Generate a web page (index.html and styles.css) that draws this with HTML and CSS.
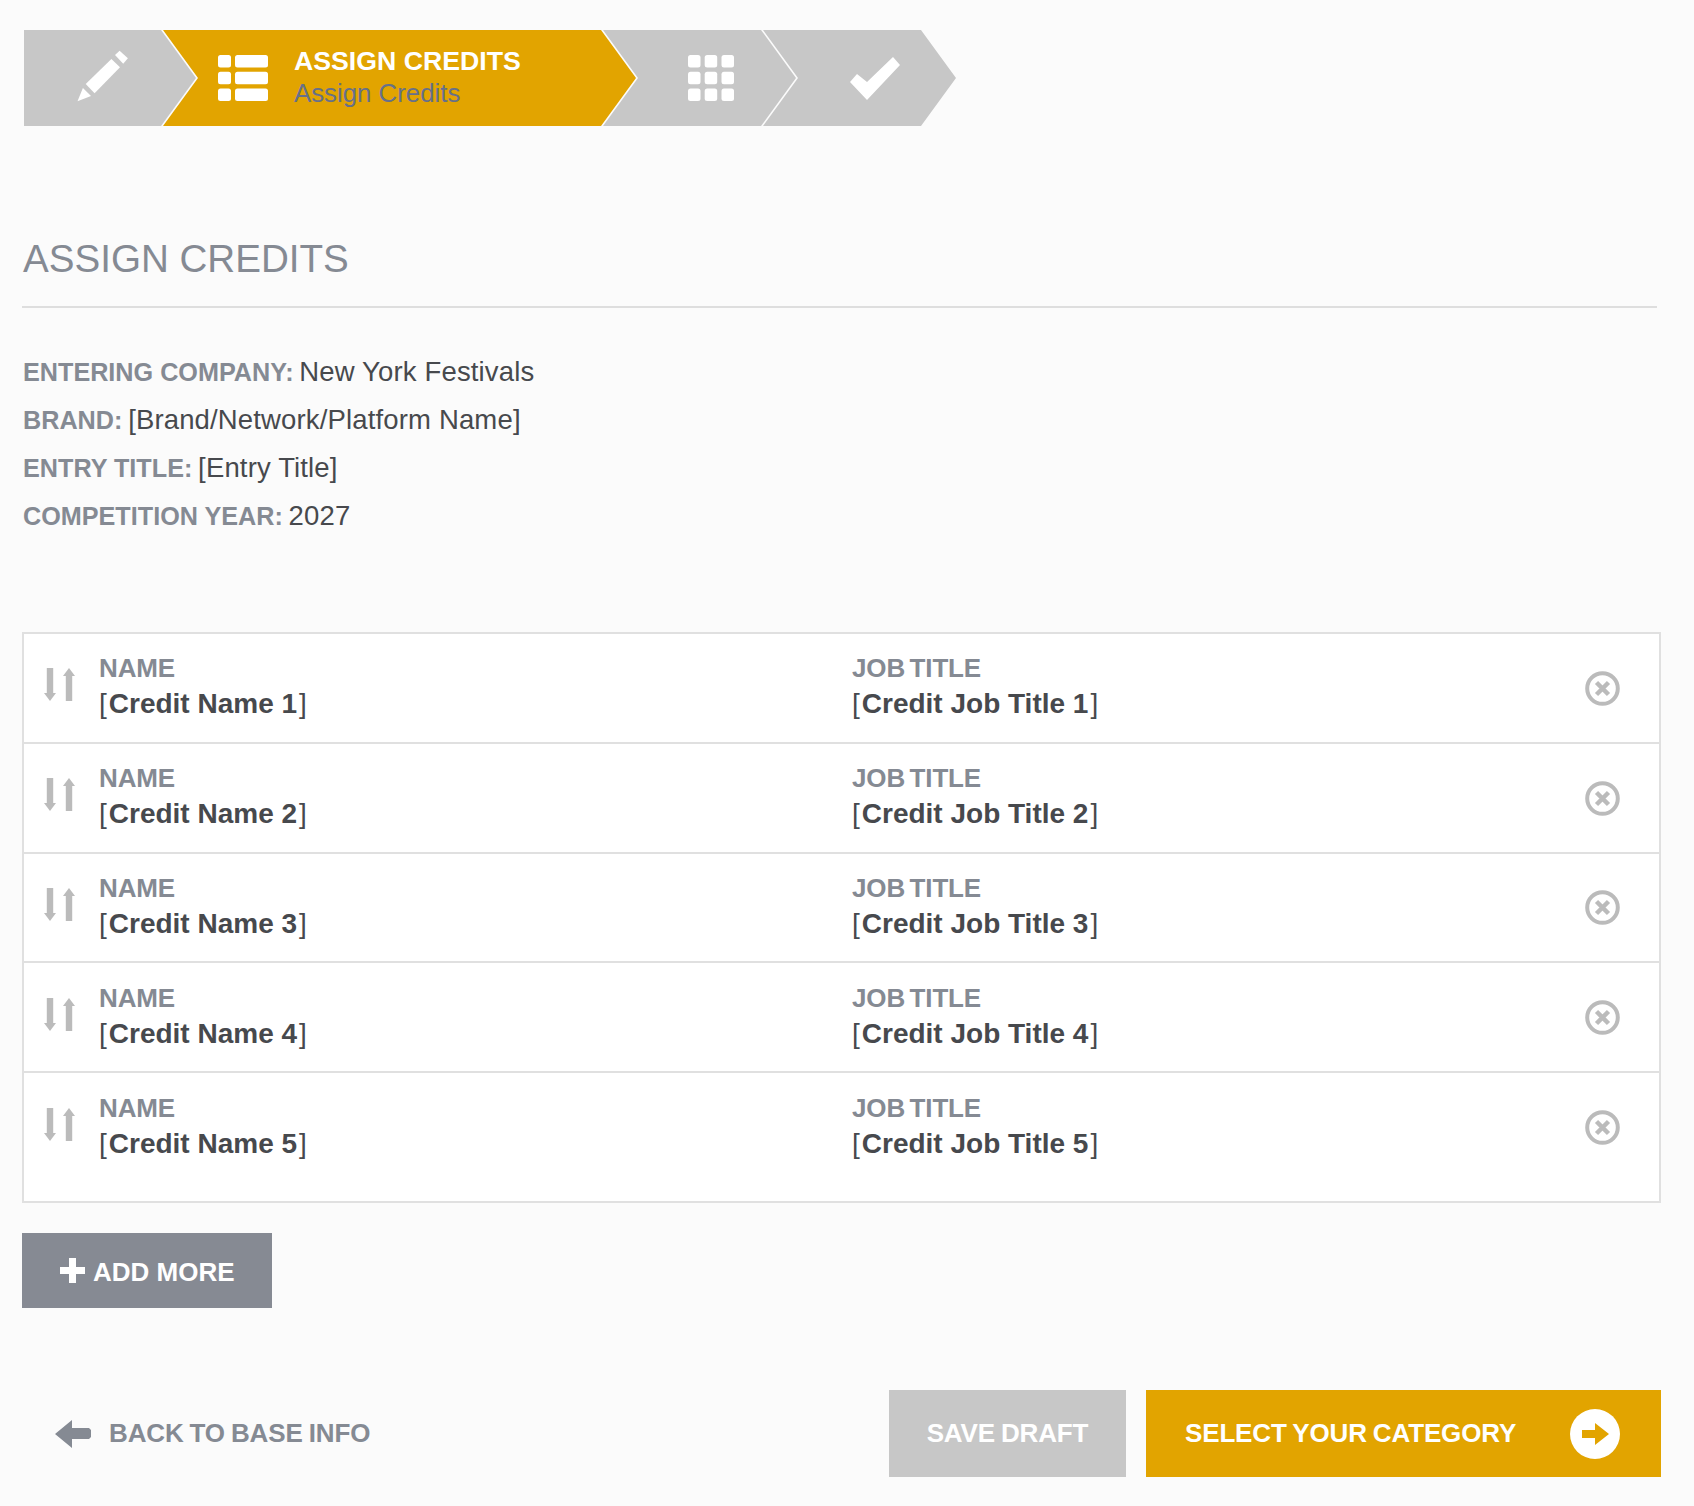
FILE: index.html
```html
<!DOCTYPE html>
<html lang="en">
<head>
    <meta charset="UTF-8">
    <meta name="viewport" content="width=device-width, initial-scale=1.0">
    <title>Assign Credits</title>
    <link rel="stylesheet" href="styles.css">
</head>
<body>

    <svg class="defs" width="0" height="0">
        <symbol id="icon-sort" viewBox="0 0 31 33">
            <path d="M2.800 0h6.400v25H12L6 33 0 25h2.800z"/>
            <path d="M21.800 33h6.400V8H31L25 0 19 8h2.800z"/>
        </symbol>
        <symbol id="icon-remove" viewBox="0 0 35 35">
            <circle cx="17.500" cy="17.500" r="15.300" fill="none" stroke="#bbb" stroke-width="4"/>
            <path d="M11.500 11.500l12 12M23.500 11.500l-12 12" fill="none" stroke="#bbb" stroke-width="4.500"/>
        </symbol>
    </svg>

    <!-- Step Navigation -->
    <div class="steps">
        <div class="step step-first step-pencil">
            <svg class="step-icon" width="52" height="52" viewBox="0 0 52 52">
                <path d="M.5 51.300L5.900 38 14 46z"/>
                <path d="M8.700 34L34.400 9 43 17.300 17.600 43.300z"/>
                <path d="M38 5L42.600.7 50.900 8.300 46.200 13.700z"/>
            </svg>
        </div>
        <div class="step step-active">
            <svg class="step-icon" width="50" height="46" viewBox="0 0 50 46">
                <rect width="13" height="12.500" rx="2.500"/>
                <rect x="17" width="33" height="12.500" rx="2.500"/>
                <rect y="16.700" width="13" height="12.500" rx="2.500"/>
                <rect x="17" y="16.700" width="33" height="12.500" rx="2.500"/>
                <rect y="33.500" width="13" height="12.500" rx="2.500"/>
                <rect x="17" y="33.500" width="33" height="12.500" rx="2.500"/>
            </svg>
            <div class="step-text">
                <div class="step-title">ASSIGN CREDITS</div>
                <div class="step-sub">Assign Credits</div>
            </div>
        </div>
        <div class="step step-grid">
            <svg class="step-icon" width="46" height="46" viewBox="0 0 46 46">
                <rect width="12.500" height="12.500" rx="2.500"/>
                <rect x="16.700" width="12.500" height="12.500" rx="2.500"/>
                <rect x="33.500" width="12.500" height="12.500" rx="2.500"/>
                <rect y="16.700" width="12.500" height="12.500" rx="2.500"/>
                <rect x="16.700" y="16.700" width="12.500" height="12.500" rx="2.500"/>
                <rect x="33.500" y="16.700" width="12.500" height="12.500" rx="2.500"/>
                <rect y="33.500" width="12.500" height="12.500" rx="2.500"/>
                <rect x="16.700" y="33.500" width="12.500" height="12.500" rx="2.500"/>
                <rect x="33.500" y="33.500" width="12.500" height="12.500" rx="2.500"/>
            </svg>
        </div>
        <div class="step step-check">
            <svg class="step-icon" width="50" height="43" viewBox="0 0 50 43">
                <path d="M0 25l7-8 10 8L43 0l7 8-33 35z"/>
            </svg>
        </div>
    </div>

    <!-- Section Heading -->
    <h2 class="section-title">ASSIGN CREDITS</h2>

    <div class="entry-info">
        <p><strong>ENTERING COMPANY:</strong> New York Festivals</p>
        <p><strong>BRAND:</strong> [Brand/Network/Platform Name]</p>
        <p><strong>ENTRY TITLE:</strong> [Entry Title]</p>
        <p><strong>COMPETITION YEAR:</strong> 2027</p>
    </div>

    <!-- Credits List -->
    <div class="credits">
        <div class="credit-row">
            <svg class="sort-icon"><use href="#icon-sort"/></svg>
            <div class="credit-col credit-name">
                <div class="credit-label">NAME</div>
                <div class="credit-value"><span>[</span>Credit Name 1<span>]</span></div>
            </div>
            <div class="credit-col">
                <div class="credit-label">JOB TITLE</div>
                <div class="credit-value"><span>[</span>Credit Job Title 1<span>]</span></div>
            </div>
            <svg class="remove-icon"><use href="#icon-remove"/></svg>
        </div>
        <div class="credit-row">
            <svg class="sort-icon"><use href="#icon-sort"/></svg>
            <div class="credit-col credit-name">
                <div class="credit-label">NAME</div>
                <div class="credit-value"><span>[</span>Credit Name 2<span>]</span></div>
            </div>
            <div class="credit-col">
                <div class="credit-label">JOB TITLE</div>
                <div class="credit-value"><span>[</span>Credit Job Title 2<span>]</span></div>
            </div>
            <svg class="remove-icon"><use href="#icon-remove"/></svg>
        </div>
        <div class="credit-row">
            <svg class="sort-icon"><use href="#icon-sort"/></svg>
            <div class="credit-col credit-name">
                <div class="credit-label">NAME</div>
                <div class="credit-value"><span>[</span>Credit Name 3<span>]</span></div>
            </div>
            <div class="credit-col">
                <div class="credit-label">JOB TITLE</div>
                <div class="credit-value"><span>[</span>Credit Job Title 3<span>]</span></div>
            </div>
            <svg class="remove-icon"><use href="#icon-remove"/></svg>
        </div>
        <div class="credit-row">
            <svg class="sort-icon"><use href="#icon-sort"/></svg>
            <div class="credit-col credit-name">
                <div class="credit-label">NAME</div>
                <div class="credit-value"><span>[</span>Credit Name 4<span>]</span></div>
            </div>
            <div class="credit-col">
                <div class="credit-label">JOB TITLE</div>
                <div class="credit-value"><span>[</span>Credit Job Title 4<span>]</span></div>
            </div>
            <svg class="remove-icon"><use href="#icon-remove"/></svg>
        </div>
        <div class="credit-row credit-row-last">
            <svg class="sort-icon"><use href="#icon-sort"/></svg>
            <div class="credit-col credit-name">
                <div class="credit-label">NAME</div>
                <div class="credit-value"><span>[</span>Credit Name 5<span>]</span></div>
            </div>
            <div class="credit-col">
                <div class="credit-label">JOB TITLE</div>
                <div class="credit-value"><span>[</span>Credit Job Title 5<span>]</span></div>
            </div>
            <svg class="remove-icon"><use href="#icon-remove"/></svg>
        </div>
    </div>

    <button class="btn-add">
        <svg width="25" height="25" viewBox="0 0 25 25"><path d="M9 0h7v9h9v7h-9v9H9v-9H0V9h9z"/></svg>
        <span>ADD MORE</span>
    </button>

    <!-- Footer Actions -->
    <div class="footer">
        <a class="back-link" href="#">
            <svg width="36" height="28" viewBox="0 0 36 28"><path d="M0 14L17 0v8h17l2 2v7l-2 2H17v9z"/></svg>
            BACK TO BASE INFO
        </a>
        <div class="footer-buttons">
            <button class="btn-draft">SAVE DRAFT</button>
            <button class="btn-next">
                SELECT YOUR CATEGORY
                <svg width="50" height="50" viewBox="0 0 50 50">
                    <circle cx="25" cy="25" r="25" fill="#fff"/>
                    <path d="M12 21h13v-7l14 11-14 11v-7H12z" fill="#e2a400"/>
                </svg>
            </button>
        </div>
    </div>

</body>
</html>
```

FILE: styles.css
```css
body {
    font-family: "Liberation Sans", Arial, sans-serif;
    margin: 0;
    padding: 30px 33px 29px 22px;
    background-color: #fbfbfb;
    color: #47494d;
}

.defs {
    position: absolute;
}

/* Step Navigation */
.steps {
    display: flex;
    margin-left: 2px;
}

.step {
    display: flex;
    align-items: center;
    height: 96px;
    margin-left: -33px;
    background-color: #c7c7c7;
    clip-path: polygon(0 0, calc(100% - 35px) 0, 100% 50%, calc(100% - 35px) 100%, 0 100%, 35px 50%);
}

.step-icon {
    fill: #fff;
    flex-shrink: 0;
}

.step-first {
    margin-left: 0;
    clip-path: polygon(0 0, calc(100% - 35px) 0, 100% 50%, calc(100% - 35px) 100%, 0 100%);
}

.step-pencil {
    width: 172px;
    padding-left: 53px;
    box-sizing: border-box;
}

.step-pencil .step-icon {
    margin-bottom: 4px;
}

.step-active {
    width: 473px;
    padding-left: 55px;
    box-sizing: border-box;
    background-color: #e2a400;
}

.step-grid {
    width: 193px;
    padding-left: 85px;
    box-sizing: border-box;
}

.step-check {
    width: 193px;
    padding-left: 87px;
    box-sizing: border-box;
}

.step-text {
    margin-left: 26px;
    margin-bottom: 2px;
}

.step-title {
    color: #fff;
    font-size: 26.7px;
    font-weight: bold;
    line-height: 32px;
}

.step-sub {
    color: #66708a;
    font-size: 25.8px;
    line-height: 32px;
}

/* Section Heading */
.section-title {
    margin: 108px 4px 0 0;
    padding: 0 0 22px 1px;
    border-bottom: 2px solid #dedede;
    color: #858a93;
    font-size: 38.6px;
    font-weight: normal;
    line-height: 50px;
}

.entry-info {
    margin-top: 40px;
    margin-left: 1px;
    font-size: 27.5px;
    letter-spacing: 0.15px;
}

.entry-info p {
    margin: 0;
    line-height: 48px;
}

.entry-info strong {
    margin-right: -2px;
    color: #858a93;
    font-size: 25.2px;
    letter-spacing: 0;
}

/* Credits List */
.credits {
    margin-top: 92px;
    border: 2px solid #e0e0e0;
    background-color: #fff;
}

.credit-row {
    display: flex;
    align-items: center;
    height: 107.8px;
    padding-left: 20px;
    border-bottom: 2px solid #e0e0e0;
}

.credit-row-last {
    height: 128px;
    padding-bottom: 20px;
    box-sizing: border-box;
    border-bottom: none;
}

.sort-icon {
    width: 31px;
    height: 33px;
    margin-bottom: 6px;
    fill: #bbb;
    flex-shrink: 0;
}

.credit-col {
    flex: 1;
    margin-bottom: 3px;
}

.credit-name {
    flex: none;
    width: 753px;
    margin-left: 24px;
}

.credit-label {
    color: #858a93;
    font-size: 26px;
    font-weight: bold;
    letter-spacing: -0.15px;
    word-spacing: -2.5px;
    line-height: 35px;
}

.credit-value {
    font-size: 28px;
    font-weight: bold;
    line-height: 35px;
}

.credit-value span {
    font-weight: normal;
}

.credit-value span:first-child {
    margin-right: 2px;
}

.credit-value span:last-child {
    margin-left: 2px;
}

.remove-icon {
    width: 35px;
    height: 35px;
    margin-top: 1px;
    margin-right: 39px;
    flex-shrink: 0;
}

/* Buttons */
button {
    border: none;
    font-family: inherit;
    font-weight: bold;
    cursor: pointer;
}

.btn-add {
    display: flex;
    align-items: center;
    gap: 8px;
    width: 250px;
    height: 75px;
    margin-top: 30px;
    padding: 0 0 0 38px;
    background-color: #868a93;
    color: #fff;
    font-size: 26px;
}

.btn-add span {
    margin-top: 3px;
}

.btn-add svg {
    fill: #fff;
}

.footer {
    display: flex;
    justify-content: space-between;
    align-items: center;
    margin-top: 82px;
}

.back-link {
    display: flex;
    align-items: center;
    gap: 18px;
    margin-left: 33px;
    color: #858a93;
    font-size: 26px;
    font-weight: bold;
    letter-spacing: -0.15px;
    word-spacing: -1px;
    text-decoration: none;
}

.back-link svg {
    fill: #858a93;
}

.footer-buttons {
    display: flex;
    gap: 20px;
}

.btn-draft {
    width: 237px;
    height: 87px;
    background-color: #c7c7c7;
    color: #fff;
    font-size: 26px;
    letter-spacing: -0.15px;
    word-spacing: -1px;
}

.btn-next {
    display: flex;
    align-items: center;
    justify-content: space-between;
    width: 515px;
    height: 87px;
    padding: 0 41px 0 39px;
    background-color: #e2a400;
    color: #fff;
    font-size: 26px;
    letter-spacing: -0.15px;
    word-spacing: -1px;
}
```
